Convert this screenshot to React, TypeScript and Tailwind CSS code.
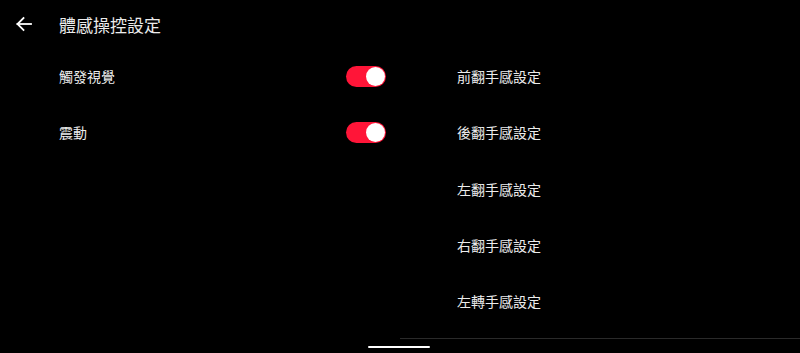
import React from "react";

const font = { fontFamily: '"Noto Sans CJK TC", "Noto Sans", sans-serif' };

function Toggle() {
  return (
    <div className="w-[40px] h-[21px] rounded-full bg-[#ff1538] flex items-center justify-end pr-[1px]">
      <div className="w-[19px] h-[19px] rounded-full bg-white" />
    </div>
  );
}

export default function App() {
  const right = ["前翻手感設定", "後翻手感設定", "左翻手感設定", "右翻手感設定", "左轉手感設定"];
  return (
    <div className="w-[800px] h-[353px] bg-black text-[#ececec] overflow-hidden flex flex-col relative" style={font}>
      <div className="h-[48px] flex items-center shrink-0">
        <div className="w-[59px] flex items-center pl-[15px]">
          <svg width="18" height="18" viewBox="0 0 18 18" fill="none" stroke="#ffffff" strokeWidth="1.8" strokeLinecap="square">
            <path d="M2.5 9 H16" />
            <path d="M8.5 3 L2.5 9 L8.5 15" />
          </svg>
        </div>
        <span className="text-[17px] leading-none">體感操控設定</span>
      </div>
      <div className="flex flex-1">
        <div className="w-[400px] flex flex-col pl-[59px] pr-[14px]">
          <div className="h-[56px] flex items-center justify-between">
            <span className="text-[14px]">觸發視覺</span>
            <Toggle />
          </div>
          <div className="h-[57px] flex items-center justify-between">
            <span className="text-[14px]">震動</span>
            <Toggle />
          </div>
        </div>
        <div className="w-[400px] flex flex-col">
          {right.map((t) => (
            <div key={t} className="h-[56.25px] flex items-center pl-[57px] pt-[1px]">
              <span className="text-[14px]">{t}</span>
            </div>
          ))}
          <div className="h-[1px] bg-[#2a2a2a] mt-[9px]" />
        </div>
      </div>
      <div className="absolute left-[368px] top-[346px] w-[62px] h-[2px] bg-white rounded-full" />
    </div>
  );
}
